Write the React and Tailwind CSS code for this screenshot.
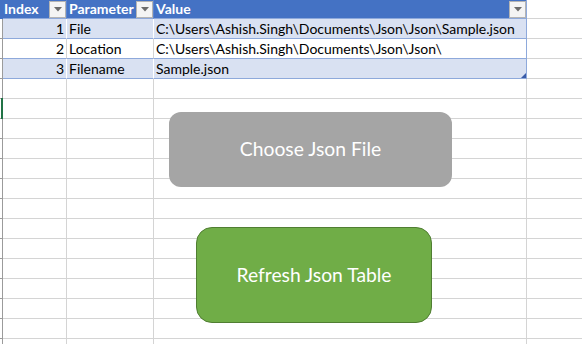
import React from "react";

const FONT = { fontFamily: "Lato, 'Liberation Sans', sans-serif" };

function Drop() {
  return (
    <div className="mt-[1px] flex h-[17px] w-[17px] shrink-0 items-center justify-center border border-[#b4b4b4] bg-[#f4f4f4]">
      <svg width="8" height="5" viewBox="0 0 8 5">
        <polygon points="0,0 8,0 4,4.5" fill="#6b6b6b" />
      </svg>
    </div>
  );
}

const data = [
  ["1", "File", "C:\\Users\\Ashish.Singh\\Documents\\Json\\Json\\Sample.json"],
  ["2", "Location", "C:\\Users\\Ashish.Singh\\Documents\\Json\\Json\\"],
  ["3", "Filename", "Sample.json"],
];

export default function App() {
  const empties = Array.from({ length: 14 });
  return (
    <div
      className="relative h-[344px] w-[582px] overflow-hidden bg-white text-[14px] text-black"
      style={FONT}
    >
      {/* header */}
      <div className="flex h-[19px]">
        <div className="w-[3px] shrink-0 bg-[#4472c4]" />
        <div className="flex w-[64px] shrink-0 justify-between border-b border-r border-b-[#8ea9db] border-r-[#5b85cf] bg-[#4472c4] pl-[1px] font-bold leading-[18px] text-white">
          <span>Index</span>
          <Drop />
        </div>
        <div className="flex w-[87px] shrink-0 justify-between border-b border-r border-b-[#8ea9db] border-r-[#5b85cf] bg-[#4472c4] pl-[2px] font-bold leading-[18px] text-white">
          <span>Parameter</span>
          <Drop />
        </div>
        <div className="flex w-[373px] shrink-0 justify-between border-b border-r border-b-[#8ea9db] border-r-[#8ea9db] bg-[#4472c4] pl-[2px] font-bold leading-[18px] text-white">
          <span>Value</span>
          <Drop />
        </div>
        <div className="flex-1 border-b border-[#d4d4d4]" />
      </div>

      {/* table rows */}
      {data.map((r, i) => {
        const band = i % 2 === 0;
        const bg = band ? "bg-[#d9e1f2]" : "bg-white";
        const sep = band ? "border-r-white" : "border-r-[#d4d4d4]";
        return (
          <div key={i} className="flex h-[20px]">
            <div className="w-[3px] shrink-0 border-b border-r border-b-[#9b9b9b] border-r-[#9b9b9b]" />
            <div className={`w-[64px] shrink-0 border-b border-r border-b-[#8ea9db] ${sep} ${bg} pr-[2px] text-right leading-[19px]`}>
              {r[0]}
            </div>
            <div className={`w-[87px] shrink-0 border-b border-r border-b-[#8ea9db] ${sep} ${bg} pl-[2px] leading-[19px]`}>
              {r[1]}
            </div>
            <div className={`relative w-[373px] shrink-0 whitespace-nowrap border-b border-r border-b-[#8ea9db] border-r-[#8ea9db] ${bg} pl-[2px] leading-[19px]`}>
              {r[2]}
              {i === 2 && (
                <svg className="absolute bottom-0 right-0" width="5" height="5" viewBox="0 0 5 5">
                  <polygon points="5,0 5,5 0,5" fill="#3a5ca8" />
                </svg>
              )}
            </div>
            <div className="flex-1 border-b border-[#d4d4d4]" />
          </div>
        );
      })}

      {/* empty rows */}
      {empties.map((_, i) => (
        <div key={i} className="flex h-[20px]">
          <div className="w-[3px] shrink-0 border-b border-r border-b-[#9b9b9b] border-r-[#9b9b9b]">
            {i === 1 && <div className="ml-[1px] h-[21px] -mt-[1px] w-[2px] bg-[#217346]" />}
          </div>
          <div className="w-[64px] shrink-0 border-b border-r border-[#d4d4d4]" />
          <div className="w-[87px] shrink-0 border-b border-r border-[#d4d4d4]" />
          <div className="w-[373px] shrink-0 border-b border-r border-[#d4d4d4]" />
          <div className="flex-1 border-b border-[#d4d4d4]" />
        </div>
      ))}

      {/* shapes */}
      <div className="absolute left-[169px] top-[112px] flex h-[75px] w-[283px] items-center justify-center rounded-[12px] bg-[#a5a5a5] text-[19.3px] text-white">
        Choose Json File
      </div>
      <div className="absolute left-[196px] top-[227px] flex h-[96px] w-[236px] items-center justify-center rounded-[16px] border border-[#507e32] bg-[#70ad47] text-[19.3px] text-white">
        Refresh Json Table
      </div>
    </div>
  );
}
